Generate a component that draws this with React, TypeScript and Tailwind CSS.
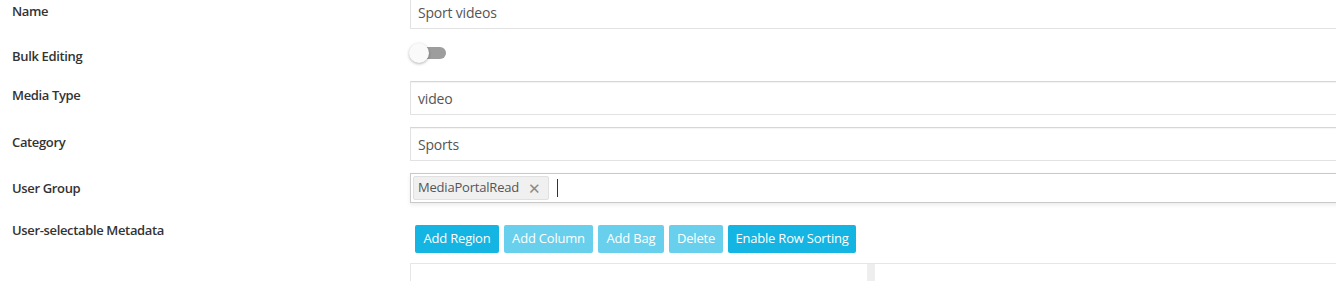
import type { ReactNode } from "react";

const font = { fontFamily: '"Open Sans", "Noto Sans", sans-serif' };

function Row({ label, labelPad, children, className = "" }: { label: string; labelPad: string; children: ReactNode; className?: string }) {
  return (
    <div className={`flex items-start ${className}`}>
      <div className={`w-[410px] shrink-0 pl-3 text-[13px] leading-[18px] font-semibold tracking-[-0.35px] text-[#333] ${labelPad}`}>{label}</div>
      <div className="flex-1 min-w-0">{children}</div>
    </div>
  );
}

function TextBox({ value }: { value: string }) {
  return (
    <div className="h-[34px] border border-[#e2e2e2] border-t-[#d6d6d6] bg-white pl-[7px] flex items-center text-[14px] tracking-[-0.2px] text-[#555] shadow-[inset_0_1px_1px_rgba(0,0,0,0.05)]">
      {value}
    </div>
  );
}

const buttons = [
  { text: "Add Region", w: "w-[84px]", on: true },
  { text: "Add Column", w: "w-[89px]", on: false },
  { text: "Add Bag", w: "w-[66px]", on: false },
  { text: "Delete", w: "w-[54px]", on: false },
  { text: "Enable Row Sorting", w: "w-[128px]", on: true },
];

export default function App() {
  return (
    <div className="w-[1336px] h-[281px] overflow-hidden bg-white" style={font}>
      <div className="mr-[-6px] flex flex-col">
        <Row label="Name" labelPad="pt-[7px]" className="mt-[-5px]">
          <TextBox value="Sport videos" />
        </Row>

        <Row label="Bulk Editing" labelPad="pt-[6px]" className="mt-[12px] h-[28px]">
          <div className="relative mt-[4px] h-[20px] w-[37px]">
            <div className="absolute left-[10px] top-[2px] h-[12px] w-[26px] rounded-full bg-[#9d9d9d]" />
            <div className="absolute left-[-1px] top-[-2px] h-[20px] w-[20px] rounded-full bg-[#fafafa] shadow-[0_1px_3px_rgba(0,0,0,0.3)]" />
          </div>
        </Row>

        <Row label="Media Type" labelPad="pt-[5px]" className="mt-[12px]">
          <TextBox value="video" />
        </Row>

        <Row label="Category" labelPad="pt-[6px]" className="mt-[12px]">
          <TextBox value="Sports" />
        </Row>

        <Row label="User Group" labelPad="pt-[6px]" className="mt-[12px]">
          <div className="h-[30px] border border-[#c9c9c9] bg-white flex items-center pl-[2px] shadow-[0_2px_4px_rgba(0,0,0,0.08)]">
            <span className="flex h-[24px] items-center rounded-[2px] border border-[#e0e0e0] bg-[#f0f0f0] pl-[4px] pr-[7px] text-[13px] tracking-[-0.2px] text-[#555]">
              MediaPortalRead
              <span className="ml-[9px] text-[15px] leading-none text-[#8a8a8a]">✕</span>
            </span>
            <span className="ml-[8px] h-[18px] w-px bg-[#333]" />
          </div>
        </Row>

        <Row label="User-selectable Metadata" labelPad="pt-[6px]" className="mt-[12px]">
          <div className="mt-[10px] flex gap-[5px] pl-[5px]">
            {buttons.map((b) => (
              <button
                key={b.text}
                className={`${b.w} h-[28px] rounded-[2px] text-[13px] tracking-[-0.2px] text-white flex items-center justify-center ${b.on ? "bg-[#14b4e3]" : "bg-[#68cfec]"}`}
              >
                {b.text}
              </button>
            ))}
          </div>
          <div className="mt-[10px] flex h-[40px] border-l border-t border-[#e6e6e6]">
            <div className="w-[456px] shrink-0" />
            <div className="w-[8px] shrink-0 bg-[#eeeeee]" />
            <div className="flex-1 pl-[11px] pt-[13px] text-[13px] leading-[18px] text-[#333]">Bag fields</div>
          </div>
        </Row>
      </div>
    </div>
  );
}
